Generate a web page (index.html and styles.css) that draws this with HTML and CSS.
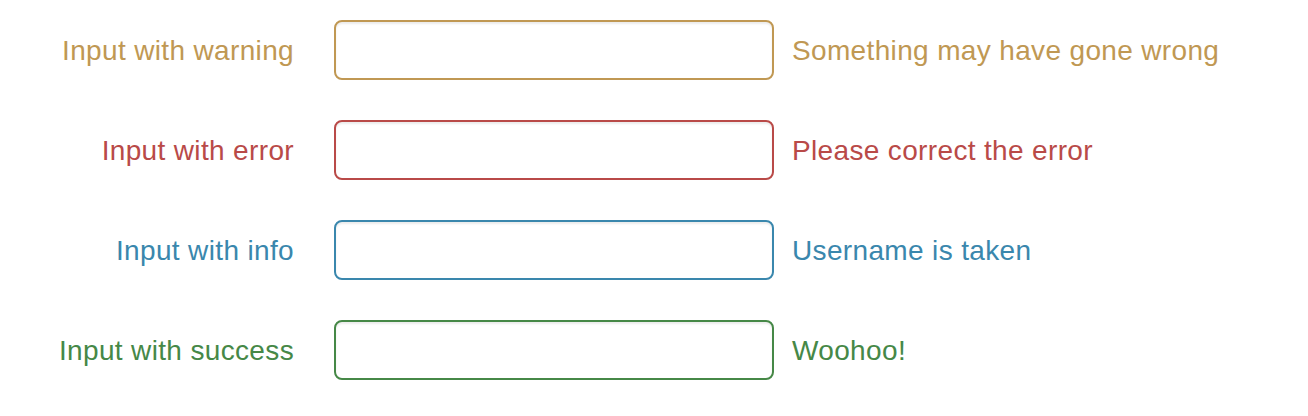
FILE: index.html
```html
<!DOCTYPE html>
<html>
<head>
<meta charset="utf-8">
<link rel="stylesheet" href="styles.css">
</head>
<body>
<form class="form">
  <div class="group warning">
    <label class="label">Input with warning</label>
    <input class="field" type="text">
    <span class="help">Something may have gone wrong</span>
  </div>
  <div class="group error">
    <label class="label">Input with error</label>
    <input class="field" type="text">
    <span class="help">Please correct the error</span>
  </div>
  <div class="group info">
    <label class="label">Input with info</label>
    <input class="field" type="text">
    <span class="help">Username is taken</span>
  </div>
  <div class="group success">
    <label class="label">Input with success</label>
    <input class="field" type="text">
    <span class="help">Woohoo!</span>
  </div>
</form>
</body>
</html>
```
FILE: styles.css
```css
html, body {
  margin: 0;
  padding: 0;
  background: #ffffff;
}
.form {
  display: flex;
  flex-direction: column;
  gap: 40px;
  padding-top: 20px;
  font-family: "Liberation Sans", Arial, Helvetica, sans-serif;
  font-size: 28px;
  letter-spacing: 0.35px;
}
.group {
  display: flex;
  align-items: center;
  height: 60px;
}
.label {
  width: 294px;
  text-align: right;
  line-height: 40px;
  padding-top: 2px;
}
.field {
  box-sizing: border-box;
  width: 440px;
  height: 60px;
  margin: 0 0 0 40px;
  padding: 8px 12px;
  border: 2px solid #cccccc;
  border-radius: 8px;
  background: #ffffff;
  box-shadow: inset 0 2px 2px rgba(0, 0, 0, 0.075);
  font: inherit;
  outline: none;
}
.help {
  margin-left: 18px;
  line-height: 40px;
  padding-top: 2px;
}
.warning { color: #c09853; }
.warning .field { border-color: #c09853; }
.error { color: #b94a48; }
.error .field { border-color: #b94a48; }
.info { color: #3a87ad; }
.info .field { border-color: #3a87ad; }
.success { color: #468847; }
.success .field { border-color: #468847; }
```
